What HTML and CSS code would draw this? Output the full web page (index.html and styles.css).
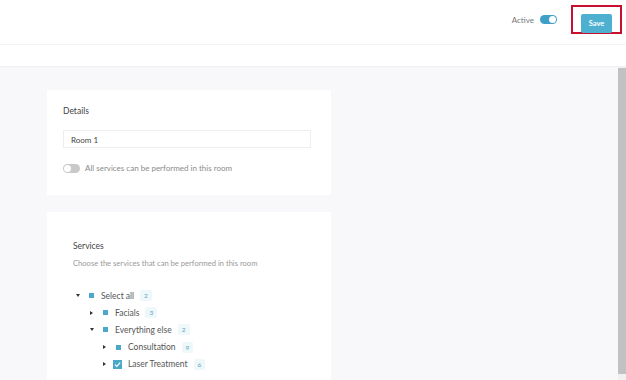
FILE: index.html
```html
<!DOCTYPE html>
<html lang="en">
<head>
<meta charset="UTF-8">
<title>Room</title>
<link rel="stylesheet" href="styles.css">
</head>
<body>
  <div class="header">
    <span class="status-label">Active</span>
    <span class="switch on"><span class="knob"></span></span>
    <div class="save-frame"><button class="save-btn">Save</button></div>
  </div>
  <div class="header-gap"></div>
  <div class="main">
    <div class="content">
      <div class="card details">
        <div class="card-title">Details</div>
        <div class="text-input">Room 1</div>
        <div class="toggle-row">
          <span class="switch off"><span class="knob"></span></span>
          <span>All services can be performed in this room</span>
        </div>
      </div>
      <div class="card services">
        <div class="card-title">Services</div>
        <div class="subtitle">Choose the services that can be performed in this room</div>
        <ul class="tree">
          <li class="lvl0"><span class="caret down"></span><span class="mark"></span><span class="name">Select all</span><span class="badge">2</span></li>
          <li class="lvl1"><span class="caret"></span><span class="mark"></span><span class="name">Facials</span><span class="badge">3</span></li>
          <li class="lvl1"><span class="caret down"></span><span class="mark"></span><span class="name">Everything else</span><span class="badge">2</span></li>
          <li class="lvl2"><span class="caret"></span><span class="mark"></span><span class="name">Consultation</span><span class="badge">9</span></li>
          <li class="lvl2"><span class="caret"></span><span class="check">
            <svg width="9" height="9" viewBox="0 0 9 9"><path d="M2 4.6 L3.8 6.4 L7.2 2.6" fill="none" stroke="#fff" stroke-width="1.2"/></svg>
          </span><span class="name">Laser Treatment</span><span class="badge">6</span></li>
        </ul>
      </div>
    </div>
    <div class="scrollbar"><div class="thumb"></div></div>
  </div>
</body>
</html>
```

FILE: styles.css
```css
body, html {
  margin: 0;
  padding: 0;
  height: 100%;
  font-family: Lato, "Open Sans", sans-serif;
  color: #444;
  overflow: hidden;
}

.header {
  height: 44px;
  background: #fff;
  border-bottom: 1px solid #f3f3f5;
  display: flex;
  align-items: center;
  justify-content: flex-end;
  padding-right: 4px;
  box-shadow: 0 1px 2px rgba(0, 0, 0, 0.02);
}

.status-label {
  font-size: 8px;
  color: #777;
  margin-right: 6px;
  margin-top: -5px;
}

.switch {
  display: inline-block;
  width: 17px;
  height: 9px;
  border-radius: 5px;
  position: relative;
}

.switch .knob {
  position: absolute;
  top: 1px;
  width: 7px;
  height: 7px;
  border-radius: 50%;
  background: #fff;
}

.switch.on {
  background: #3e9fc8;
  margin-top: -5px;
}

.switch.on .knob {
  right: 1px;
}

.switch.off {
  background: #c9c9c9;
}

.switch.off .knob {
  left: 1px;
}

.save-frame {
  margin-left: 14px;
  margin-top: -6px;
  border: 2px solid #c8102e;
  padding: 3px 8px;
  width: 31px;
  height: 19px;
}

.save-btn {
  width: 31px;
  height: 19px;
  border: 0;
  border-radius: 2px;
  background: #4eb0d0;
  color: #fff;
  font-family: inherit;
  font-size: 7.5px;
  font-weight: bold;
  padding: 0;
}

.header-gap {
  height: 21px;
  background: #fff;
}

.main {
  display: flex;
  height: calc(100% - 66px);
  background: #f8f8fa;
  border-top: 1px solid #efeff2;
}

.content {
  flex: 1;
  padding: 23px 0 0 47px;
}

.card {
  background: #fff;
  width: 284px;
  box-sizing: border-box;
}

.card-title {
  font-size: 8.5px;
  color: #3f3f3f;
}

.details {
  height: 105px;
  padding: 16px 20px 0 16px;
  margin-bottom: 17px;
}

.text-input {
  margin-top: 14px;
  height: 18px;
  border: 1px solid #eeeef0;
  box-sizing: border-box;
  font-size: 8px;
  padding: 4px 7px 0;
  color: #444;
}

.toggle-row {
  margin-top: 15px;
  display: flex;
  align-items: center;
  gap: 5px;
  font-size: 8px;
  color: #8a8a8a;
}

.services {
  height: 200px;
  padding: 29px 20px 0 26px;
}

.subtitle {
  margin-top: 7px;
  font-size: 7.6px;
  color: #999;
}

.tree {
  list-style: none;
  margin: 19px 0 0;
  padding: 0;
}

.tree li {
  display: flex;
  align-items: center;
  height: 17.2px;
  font-size: 8.5px;
  color: #555;
}

.tree .lvl0 { padding-left: 3px; }
.tree .lvl1 { padding-left: 17px; }
.tree .lvl2 { padding-left: 30px; }

.caret {
  width: 0;
  height: 0;
  border-top: 2px solid transparent;
  border-bottom: 2px solid transparent;
  border-left: 3px solid #333;
  margin-right: 9px;
}

.caret.down {
  border-left: 2px solid transparent;
  border-right: 2px solid transparent;
  border-top: 3px solid #333;
  border-bottom: 0;
  margin-right: 8px;
}

.mark {
  width: 5px;
  height: 5px;
  background: #4ba8c9;
  margin: 0 7px 0 1px;
}

.check {
  width: 9px;
  height: 9px;
  background: #4ba8c9;
  display: flex;
  margin: 0 6px 0 -2px;
}

.badge {
  margin-left: 6px;
  background: #eef7fa;
  color: #5fa3ba;
  font-size: 6.5px;
  padding: 2px 4px;
  border-radius: 2px;
}

.scrollbar {
  width: 8px;
  background: #f1f1f1;
  padding: 1px 0 0;
}

.scrollbar .thumb {
  height: 306px;
  background: #c1c1c1;
}
```
